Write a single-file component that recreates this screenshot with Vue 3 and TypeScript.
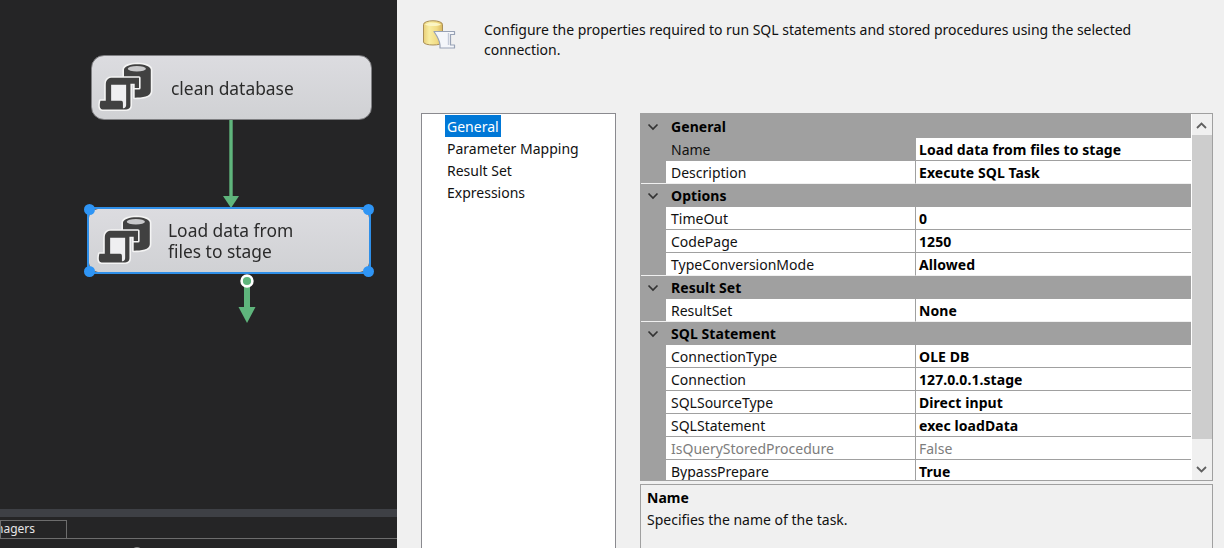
<script setup lang="ts">
interface Row { label: string; value?: string; selected?: boolean; disabled?: boolean; last?: boolean }
interface Group { title: string; rows: Row[] }

const groups: Group[] = [
  { title: 'General', rows: [
    { label: 'Name', value: 'Load data from files to stage', selected: true },
    { label: 'Description', value: 'Execute SQL Task', last: true },
  ] },
  { title: 'Options', rows: [
    { label: 'TimeOut', value: '0' },
    { label: 'CodePage', value: '1250' },
    { label: 'TypeConversionMode', value: 'Allowed', last: true },
  ] },
  { title: 'Result Set', rows: [
    { label: 'ResultSet', value: 'None', last: true },
  ] },
  { title: 'SQL Statement', rows: [
    { label: 'ConnectionType', value: 'OLE DB' },
    { label: 'Connection', value: '127.0.0.1.stage' },
    { label: 'SQLSourceType', value: 'Direct input' },
    { label: 'SQLStatement', value: 'exec loadData' },
    { label: 'IsQueryStoredProcedure', value: 'False', disabled: true },
    { label: 'BypassPrepare', value: 'True' },
  ] },
]
const pages: string[] = ['General', 'Parameter Mapping', 'Result Set', 'Expressions']
</script>

<template>
  <div class="root">
    <section class="designer">
      <div class="canvas">
        <div class="node node-a">
          <svg class="task-icon" viewBox="2 3 56 54" width="60" height="58">
            <path d="M30 13C30 6 55 6 55 13V33C55 38 47 39 40 39V20H30Z" fill="#414141" stroke="#f4f4f4" stroke-width="3" paint-order="stroke" stroke-linejoin="round" />
            <ellipse cx="42" cy="12" rx="8.5" ry="2.6" fill="#c9c9cb" />
            <path d="M13 27C13 22 16 20.5 19 20.5H44V30H40V26H36V46C36 49 34 50 31 50H10C7 50 7 46 8 42H13Z" fill="#414141" stroke="#f4f4f4" stroke-width="3" paint-order="stroke" stroke-linejoin="round" />
            <path d="M18 27H32V46C32 48 30 49 29 49V44C29 42 28 42 26 42H18Z" fill="#efeff1" />
          </svg>
          <span class="node-label single">clean database</span>
        </div>

        <svg class="link" width="20" height="90" viewBox="0 0 20 90">
          <path d="M10 0V78" stroke="#5fb57c" stroke-width="3.4" />
          <path d="M2 76H18L10 88Z" fill="#5fb57c" />
        </svg>

        <div class="node-frame">
          <div class="node node-b">
            <svg class="task-icon" viewBox="2 3 56 54" width="60" height="58">
              <path d="M30 13C30 6 55 6 55 13V33C55 38 47 39 40 39V20H30Z" fill="#414141" stroke="#f4f4f4" stroke-width="3" paint-order="stroke" stroke-linejoin="round" />
              <ellipse cx="42" cy="12" rx="8.5" ry="2.6" fill="#c9c9cb" />
              <path d="M13 27C13 22 16 20.5 19 20.5H44V30H40V26H36V46C36 49 34 50 31 50H10C7 50 7 46 8 42H13Z" fill="#414141" stroke="#f4f4f4" stroke-width="3" paint-order="stroke" stroke-linejoin="round" />
              <path d="M18 27H32V46C32 48 30 49 29 49V44C29 42 28 42 26 42H18Z" fill="#efeff1" />
            </svg>
            <span class="node-label">Load data from<br />files to stage</span>
          </div>
          <i class="handle tl"></i><i class="handle tr"></i><i class="handle bl"></i><i class="handle br"></i>
        </div>

        <svg class="out-link" width="24" height="56" viewBox="0 0 24 56">
          <path d="M12 6V36" stroke="#5fb57c" stroke-width="6" />
          <path d="M3.5 33H20.5L12 49Z" fill="#5fb57c" />
          <circle cx="12" cy="7" r="5.4" fill="#5fb57c" stroke="#fff" stroke-width="2.6" />
        </svg>
      </div>

      <div class="splitter"></div>
      <div class="tabs"><div class="tab">Connection Managers</div></div>
      <div class="tray"><span class="tray-dome"></span></div>
    </section>

    <section class="editor">
      <header class="intro">
        <svg class="intro-icon" viewBox="0 0 36 36" width="36" height="36">
          <defs>
            <linearGradient id="cyl" x1="0" x2="1" y1="0" y2="0">
              <stop offset="0" stop-color="#e9cf78" />
              <stop offset="0.3" stop-color="#f8eda2" />
              <stop offset="0.7" stop-color="#f2dc85" />
              <stop offset="1" stop-color="#d8b75e" />
            </linearGradient>
          </defs>
          <path d="M3.5 7.5C3.5 2.500 22.500 2.500 22.500 7.500V25C22.500 29 3.500 29 3.500 25Z" fill="url(#cyl)" stroke="#a98f58" stroke-width="1" />
          <path d="M5 7.500C8 5 18 5 21 7.500C18 9.500 8 9.500 5 7.500Z" fill="#fbf5c4" />
          <path d="M14 14.500H34.500V17.500H30.500V28H34.500V31H20V28C20 24 17 19 14 14.500Z" fill="#f4f6fa" stroke="#98a2b5" stroke-width="1.2" stroke-linejoin="round" />
          <path d="M28.500 16V28" stroke="#c4cbd8" stroke-width="1.4" />
        </svg>
        <p class="intro-text">Configure the properties required to run SQL statements and stored procedures using the selected connection.</p>
      </header>

      <div class="content">
        <ul class="pages">
          <li v-for="(page, i) in pages" :key="page" class="page"><span :class="{ active: i === 0 }">{{ page }}</span></li>
        </ul>

        <div class="right">
          <div class="grid">
            <div class="rows">
              <template v-for="group in groups" :key="group.title">
                <div class="group">
                  <svg class="chevron" width="12" height="8" viewBox="0 0 12 8"><path d="M1.500 1.500L6 6L10.500 1.500" fill="none" stroke="#333" stroke-width="1.7" /></svg>
                  <span class="group-title">{{ group.title }}</span>
                </div>
                <div v-for="row in group.rows" :key="row.label" class="row" :class="{ last: row.last }">
                  <div class="gutter"></div>
                  <div class="label" :class="{ selected: row.selected, disabled: row.disabled }">{{ row.label }}</div>
                  <div class="value" :class="{ disabled: row.disabled }">{{ row.value }}</div>
                </div>
              </template>
            </div>
            <div class="scrollbar">
              <svg class="arrow up" width="11" height="7" viewBox="0 0 11 7"><path d="M1 6L5.500 1.500L10 6" fill="none" stroke="#606060" stroke-width="1.8" /></svg>
              <div class="thumb"></div>
              <svg class="arrow down" width="11" height="7" viewBox="0 0 11 7"><path d="M1 1L5.500 5.500L10 1" fill="none" stroke="#606060" stroke-width="1.8" /></svg>
            </div>
          </div>
          <div class="desc">
            <div class="desc-title">Name</div>
            <div class="desc-text">Specifies the name of the task.</div>
          </div>
        </div>
      </div>
    </section>
  </div>
</template>

<style>
html, body { margin: 0; padding: 0; overflow: hidden; background: #f0f0f0; }
</style>

<style scoped>
.root {
  display: flex;
  width: 1224px;
  height: 548px;
  overflow: hidden;
  font-family: "Noto Sans", "Open Sans", sans-serif;
  font-size: 14px;
  color: #000;
}
.designer {
  width: 397px;
  flex: none;
  display: flex;
  flex-direction: column;
  background: #252526;
  overflow: hidden;
}
.canvas { position: relative; height: 509px; flex: none; }
.node {
  position: absolute;
  box-sizing: border-box;
  background: linear-gradient(#dcdce0, #d0d1d4);
  color: #2b2b2b;
}
.node-a { left: 91px; top: 55px; width: 281px; height: 65px; border-radius: 13px; border: 1px solid #808083; }
.node-frame {
  position: absolute;
  left: 87px;
  top: 207px;
  width: 284px;
  height: 67px;
  box-sizing: border-box;
  border: 2px solid #2f8fe8;
}
.node-b { inset: 0; border-radius: 9px; }
.task-icon { position: absolute; left: 2px; top: 3px; filter: blur(0.45px); }
.node-b .task-icon { left: 3.5px; top: 3px; }
.node-label { position: absolute; left: 79px; font-size: 17.4px; line-height: 21px; filter: blur(0.3px); white-space: nowrap; }
.node-label.single { top: 22px; }
.node-b .node-label { top: 11px; }
.handle { position: absolute; width: 11px; height: 11px; border-radius: 50%; background: #2f95f5; }
.tl { left: -5px; top: -5px; }
.tr { right: -5px; top: -5px; }
.bl { left: -5px; bottom: -5px; }
.br { right: -5px; bottom: -5px; }
.link { position: absolute; left: 221px; top: 120px; }
.out-link { position: absolute; left: 235px; top: 274px; }
.splitter { height: 8px; background: #3e4045; flex: none; }
.tabs {
  height: 21px;
  flex: none;
  border-bottom: 1px solid #6d6d6d;
  display: flex;
  align-items: flex-end;
  overflow: hidden;
}
.tab {
  box-sizing: border-box;
  height: 18px;
  width: 67px;
  flex: none;
  border: 1px solid #6d6d6d;
  border-bottom: 0;
  color: #e6e6e6;
  font-size: 12px;
  line-height: 15px;
  direction: rtl;
  white-space: nowrap;
  overflow: hidden;
  padding-right: 31px;
}
.tray { flex: 1; position: relative; }
.tray-dome { position: absolute; left: 131px; top: 8px; width: 12px; height: 12px; border-radius: 50%; background: #8a8a8a; }
.editor {
  flex: 1;
  min-width: 0;
  background: #f0f0f0;
  display: flex;
  flex-direction: column;
  overflow: hidden;
}
.intro {
  height: 113px;
  flex: none;
  box-sizing: border-box;
  padding: 17px 60px 0 23px;
  display: flex;
  gap: 28px;
}
.intro-icon { flex: none; }
.intro-text { margin: 3px 0 0; line-height: 20px; font-size: 14px; color: #111; letter-spacing: -0.02px; }
.content { display: flex; gap: 24px; padding-left: 24px; flex: 1; min-height: 0; }
.pages {
  list-style: none;
  margin: 0;
  padding: 1px 0 0 23px;
  width: 195px;
  height: 460px;
  box-sizing: border-box;
  flex: none;
  background: #fff;
  border: 1px solid #8a8a8f;
}
.page { height: 22px; color: #111; }
.page span { display: inline-block; height: 22px; line-height: 24px; padding: 0 2px; vertical-align: top; }
.page .active { background: #0078d7; color: #fff; }
.right { width: 573px; flex: none; display: flex; flex-direction: column; gap: 3px; }
.grid {
  height: 368px;
  flex: none;
  box-sizing: border-box;
  border: 1px solid #a0a0a0;
  background: #fff;
  display: flex;
}
.rows { width: 550px; flex: none; padding-top: 1px; background: #a0a0a0; overflow: hidden; margin-right: 1px; }
.group {
  height: 23px;
  background: #a0a0a0;
  position: relative;
  display: flex;
  align-items: center;
  padding-left: 30px;
}
.chevron { position: absolute; left: 6px; top: 8px; }
.group-title { font-weight: 700; letter-spacing: 0.07px; }
.row { height: 23px; display: flex; box-sizing: border-box; }
.gutter { width: 25px; flex: none; background: #a0a0a0; }
.label {
  width: 250px;
  flex: none;
  box-sizing: border-box;
  background: #fff;
  padding-left: 5px;
  line-height: 24px;
  border-bottom: 1px solid #a0a0a0;
  border-right: 1px solid #a0a0a0;
  color: #111;
}
.label.selected { background: #a0a0a0; }
.value {
  flex: 1;
  box-sizing: border-box;
  background: #fff;
  padding-left: 3px;
  line-height: 24px;
  font-weight: 700;
  letter-spacing: 0.07px;
  border-bottom: 1px solid #a0a0a0;
}
.label.disabled, .value.disabled { color: #7d7d7d; font-weight: 400; letter-spacing: 0; }
.row.last .gutter { border-bottom: 1px solid #f0f0f0; box-sizing: border-box; }
.row.last .label, .row.last .value { border-bottom-color: #f0f0f0; }
.scrollbar {
  width: 20px;
  flex: none;
  background: #f0f0f0;
  position: relative;
}
.thumb { position: absolute; left: 0; right: 0; top: 21px; height: 304px; background: #cdcdcd; }
.arrow { position: absolute; left: 4px; }
.up { top: 8px; }
.down { bottom: 7px; }
.desc {
  flex: 1;
  box-sizing: border-box;
  border: 1px solid #a0a0a0;
  border-bottom: 0;
  padding: 2px 6px;
  min-height: 100px;
}
.desc-title { font-weight: 700; line-height: 22px; }
.desc-text { line-height: 22px; color: #111; }
</style>
